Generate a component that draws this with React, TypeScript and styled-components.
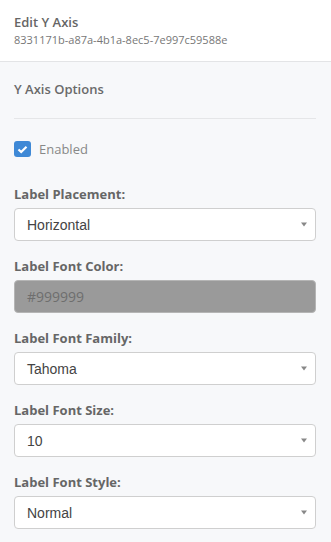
import React from "react";
import styled, { createGlobalStyle } from "styled-components";

const Global = createGlobalStyle`
  html, body { margin: 0; padding: 0; background: #f7f8fa; }
  * { box-sizing: border-box; }
`;

const Panel = styled.div`
  width: 331px;
  min-height: 542px;
  background: #f7f8fa;
  font-family: "Open Sans", "Liberation Sans", sans-serif;
  color: #666;
`;

const Header = styled.header`
  background: #fff;
  padding: 13px 15px 14px 14px;
  border-bottom: 1px solid #e3e4e6;
  display: flex;
  flex-direction: column;
  gap: 2px;
`;

const Title = styled.div`
  font-size: 13px;
  line-height: 18px;
  font-weight: 600;
  color: #666;
`;

const Id = styled.div`
  font-size: 11px;
  line-height: 14px;
  color: #777;
`;

const Body = styled.div`
  padding: 18px 15px 0 14px;
`;

const SectionTitle = styled.div`
  font-size: 13px;
  line-height: 18px;
  font-weight: 600;
  color: #6a6a6a;
`;

const Divider = styled.hr`
  border: 0;
  border-top: 1px solid #e5e6e8;
  margin: 20px 0 22px;
`;

const CheckRow = styled.label`
  display: flex;
  align-items: center;
  gap: 8px;
  height: 16px;
  margin-bottom: 28px;
  font-size: 13px;
  color: #888;
`;

const Box = styled.span`
  width: 17px;
  height: 16px;
  border-radius: 3px;
  background: #3f89d6;
  display: flex;
  align-items: center;
  justify-content: center;
`;

const Group = styled.div`
  display: flex;
  flex-direction: column;
  gap: 5px;
  margin-bottom: 16px;
`;

const Label = styled.div`
  font-size: 13px;
  line-height: 18px;
  font-weight: 700;
  color: #666;
`;

const SelectBox = styled.div`
  height: 33px;
  background: #fff;
  border: 1px solid #cfcfcf;
  border-radius: 4px;
  display: flex;
  align-items: center;
  justify-content: space-between;
  padding: 0 8px 0 12px;
  font-family: "Liberation Sans", Arial, sans-serif;
  font-size: 14px;
  color: #444;
`;

const ColorBox = styled.div`
  height: 33px;
  background: #9a9a9a;
  border: 1px solid #b5b5b5;
  border-radius: 4px;
  display: flex;
  align-items: center;
  padding: 0 12px;
  font-size: 14px;
  color: #6e6e6e;
`;

const Arrow = styled.svg`
  width: 6px;
  height: 5px;
  fill: #888;
`;

const Select = ({ value }: { value: string }) => (
  <SelectBox>
    <span>{value}</span>
    <Arrow viewBox="0 0 6 5">
      <path d="M0 0.5 H6 L3 4.5 Z" />
    </Arrow>
  </SelectBox>
);

export default function App() {
  return (
    <>
      <Global />
      <Panel>
        <Header>
          <Title>Edit Y Axis</Title>
          <Id>8331171b-a87a-4b1a-8ec5-7e997c59588e</Id>
        </Header>
        <Body>
          <SectionTitle>Y Axis Options</SectionTitle>
          <Divider />
          <CheckRow>
            <Box>
              <svg width="11" height="9" viewBox="0 0 11 9">
                <path d="M1.5 4.5 L4.2 7 L9.5 1.8" fill="none" stroke="#fff" strokeWidth="2.2" />
              </svg>
            </Box>
            Enabled
          </CheckRow>
          <Group>
            <Label>Label Placement:</Label>
            <Select value="Horizontal" />
          </Group>
          <Group>
            <Label>Label Font Color:</Label>
            <ColorBox>#999999</ColorBox>
          </Group>
          <Group>
            <Label>Label Font Family:</Label>
            <Select value="Tahoma" />
          </Group>
          <Group>
            <Label>Label Font Size:</Label>
            <Select value="10" />
          </Group>
          <Group>
            <Label>Label Font Style:</Label>
            <Select value="Normal" />
          </Group>
        </Body>
      </Panel>
    </>
  );
}
